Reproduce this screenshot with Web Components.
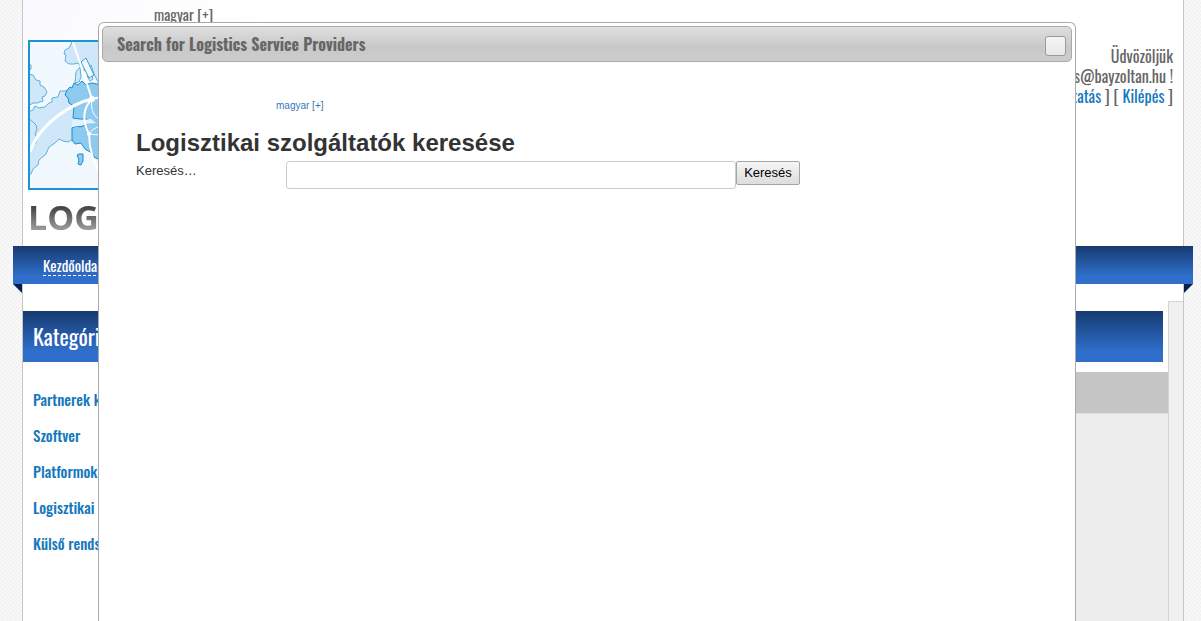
<!DOCTYPE html>
<html lang="hu">
<head>
<meta charset="utf-8">
<title>Logisztikai szolgáltatók keresése</title>
<style>
  html, body { height: 100%; }
  body {
    margin: 0;
    color: #666;
    font-family: Oswald, "Roboto Condensed", "Liberation Sans Narrow", sans-serif;
    background: repeating-conic-gradient(#f3f3f3 0 25%, #f8f8f8 0 50%) 0 0 / 4px 4px;
    --link: #1679bd;
    --band: linear-gradient(#173a70, #2f6fcb 80%);
  }
</style>
</head>
<body>
<page-frame>
  <site-header slot="header">
    <lang-switch slot="lang">magyar [+]</lang-switch>
    <europe-map slot="logo"></europe-map>
    <user-box slot="user"></user-box>
  </site-header>
  <ribbon-nav slot="nav"><a href="#">Kezdőoldal</a></ribbon-nav>
  <side-menu slot="side" heading="Kategóriák">
    <a href="#">Partnerek keresése</a>
    <a href="#">Szoftver</a>
    <a href="#">Platformok</a>
    <a href="#">Logisztikai</a>
    <a href="#">Külső rendszerek</a>
  </side-menu>
  <content-panel></content-panel>
</page-frame>

<modal-dialog heading="Search for Logistics Service Providers">
  <search-form></search-form>
</modal-dialog>

<script>
  // shared base: puts the markup into an open shadow root
  class Base extends HTMLElement {
    constructor() {
      super()
      this.attachShadow({mode: 'open'})
      this.shadowRoot.innerHTML = this.render()
    }
  }

  // page column with its side borders
  customElements.define('page-frame', class extends Base {
    render() {
      return `
        <style>
          :host {
            display: flex;
            flex-direction: column;
            box-sizing: border-box;
            min-height: 100%;
            margin: 0 17px 0 22px;
            border: solid #c6c6c6;
            border-width: 0 1px;
            background: #fff;
          }
          main {
            flex: 1;
            display: grid;
            grid-template-columns: 220px 1fr;
            column-gap: 20px;
            padding-top: 17px;
          }
          ::slotted([slot="side"]) { margin-top: 10px; }
        </style>
        <slot name="header"></slot>
        <slot name="nav"></slot>
        <main>
          <slot name="side"></slot>
          <slot></slot>
        </main>
      `
    }
  })

  customElements.define('site-header', class extends Base {
    render() {
      return `
        <style>
          :host {
            display: grid;
            grid-template-columns: 1fr auto;
            grid-template-rows: 40px auto;
            box-sizing: border-box;
            height: 246px;
            padding: 0 10px 0 5px;
            background: radial-gradient(circle at 0 0, #fafafe, #fff 240px);
          }
          ::slotted([slot="lang"]) { grid-column: 1 / 3; margin: 4px 0 0 126px; }
          strong {
            display: block;
            font: bold 34px/40px "Open Sans", sans-serif;
            margin-top: 7px;
            background: linear-gradient(#444 25%, #999 80%);
            -webkit-background-clip: text;
            background-clip: text;
            color: transparent;
          }
        </style>
        <slot name="lang"></slot>
        <div>
          <slot name="logo"></slot>
          <strong>LOG</strong>
        </div>
        <slot name="user"></slot>
      `
    }
  })

  customElements.define('lang-switch', class extends Base {
    render() {
      return `
        <style>
          :host { display: block; font-size: 15px; line-height: 20px; }
        </style>
        <slot></slot>
      `
    }
  })

  // logo: map of Europe with the routes
  customElements.define('europe-map', class extends Base {
    render() {
      return `
        <style>
          :host { display: block; width: 150px; }
          svg { display: block; }
        </style>
        <svg width="150" height="150" viewBox="0 0 150 150" role="img" aria-label="Europe">
          <rect width="150" height="150" fill="#f1f9fe"/>
          <g fill="#cfe7f8" stroke="#5cb0de" stroke-width="1">
            <path d="M0 34l5 1 3 5 4 1 0 4 4 2 3 5-2 4-3 1 1 4-6 2-4 0-5 3z"/>
            <path d="M0 24l3 1 0 4-3 3z"/>
            <path d="M0 72l5-2 2-4 4 2 6-1 4-4 3-1 0-4 6-1 2-6 6 0 3-3 3 0 50 0v58l-46-6-4 0-4 2-5-1-4-2-4 4-6 4-3 7-7 6-1 5-5 4-2 5-5 1-2 2z"/>
            <path d="M44 2l-3 6-4 2-1 4 2 1-1 6 4 3 5 0 4-1 6 8 7-6 3 9 11 22V0H45z"/>
            <path d="M47 43l1-11 4-5 1 10-2 5zM59 36l5-1 1 4-3 2z"/>
          </g>
          <path d="M0 78l4 3 4 4 1 4-2 5 2 4-1 5-3 3-5 4" fill="none" stroke="#5cb0de"/>
          <path d="M53 22l5-4 8 17-5 3z" fill="#f1f9fe" stroke="#3a9fd8"/>
          <path d="M46 103l8 2 5 5 7 7 18 8v20H46z" fill="#f1f9fe"/>
          <g fill="#8ccaef" stroke="#188fd0" stroke-width="1">
            <path d="M39 50l3-3 2 1 2-5 4 2 4-4 4 4 5-2 20 3v80l-17-9-2-4-7-4-4-6-6 1-3-4 0-12 5-2 3 1 6-2 1-6-6 0-8-1 1-12-5-3-1-5-3-3z"/>
            <path d="M44 80l13 0 6-1 5 4-12 1-6 2-6 1z" fill="#e2f2fc" stroke="none"/>
            <path d="M49 115l2-1 4 0 0 7-2 4-3-1 1-4z"/>
          </g>
          <g fill="none" stroke="#fff" stroke-width="2">
            <path d="M45 2l19 57 40-9"/>
            <path d="M64 59C46 63 12 82 2 112" stroke-width="3"/>
            <path d="M64 59C54 69 55 82 61 94C61 108 64 122 76 140"/>
            <path d="M64 59C62 70 66 80 80 83M61 94q5-9 20-8M61 94l20 2" stroke-width="1"/>
          </g>
          <circle cx="64" cy="59" r="3" fill="#fff"/>
          <circle cx="61" cy="94" r="2" fill="#fff"/>
          <rect x="1" y="1" width="148" height="148" fill="none" stroke="#1c93d2" stroke-width="2"/>
        </svg>
      `
    }
  })

  customElements.define('user-box', class extends Base {
    render() {
      return `
        <style>
          :host {
            display: block;
            margin-top: 6px;
            text-align: right;
            white-space: nowrap;
            font-size: 16px;
            line-height: 20px;
          }
          a { color: var(--link); text-decoration: none; }
        </style>
        <div>Üdvözöljük</div>
        <div>s@bayzoltan.hu !</div>
        <div><a href="#">tatás</a> ] [ <a href="#">Kilépés</a> ]</div>
      `
    }
  })

  // blue ribbon, sticks out of the column by 10px on both sides
  customElements.define('ribbon-nav', class extends Base {
    render() {
      return `
        <style>
          :host {
            display: block;
            position: relative;
            box-sizing: border-box;
            height: 38px;
            margin: 0 -10px;
            padding: 9px 30px;
            background: var(--band);
            font-size: 15px;
            line-height: 20px;
          }
          :host::before, :host::after {
            content: "";
            position: absolute;
            top: 100%;
            width: 9px;
            height: 9px;
            background: #06204a;
          }
          :host::before { left: 0; clip-path: polygon(0 0, 100% 0, 100% 100%); }
          :host::after { right: 0; clip-path: polygon(0 0, 100% 0, 0 100%); }
          ::slotted(a) {
            display: block;
            width: fit-content;
            color: #fff;
            text-decoration: none;
            border-bottom: 1px dashed #fff;
          }
        </style>
        <slot></slot>
      `
    }
  })

  customElements.define('side-menu', class extends Base {
    render() {
      return `
        <style>
          :host { display: block; }
          h2 {
            margin: 0 0 19px;
            padding: 0 10px;
            background: var(--band);
            color: #fff;
            font-size: 22px;
            font-weight: normal;
            line-height: 51px;
          }
          ::slotted(a) {
            display: block;
            padding: 0 10px;
            color: var(--link);
            font-size: 15px;
            line-height: 36px;
            text-decoration: none;
            font-weight: 500;
          }
        </style>
        <h2>${this.getAttribute('heading')}</h2>
        <nav><slot></slot></nav>
      `
    }
  })

  // main column, mostly under the dialog
  customElements.define('content-panel', class extends Base {
    render() {
      return `
        <style>
          :host { display: grid; grid-template-columns: 1fr 15px; }
          .column { display: flex; flex-direction: column; }
          .band { height: 51px; margin: 10px 5px 10px 0; background: var(--band); }
          .bar { height: 41px; background: #c5c5c5; border-bottom: 1px solid #ddd; }
          .body { flex: 1; background: #ededed; }
          aside { border: solid #d5d5d5; border-width: 1px 0 0 1px; background: #f0f0f0; }
        </style>
        <div class="column">
          <div class="band"></div>
          <div class="bar"></div>
          <div class="body"></div>
        </div>
        <aside></aside>
      `
    }
  })

  customElements.define('modal-dialog', class extends Base {
    render() {
      return `
        <style>
          :host {
            position: fixed;
            inset: 22px 125px 0 98px;
            z-index: 10;
            padding: 3px;
            border: 1px solid #aaa;
            border-bottom: 0;
            border-radius: 6px 6px 0 0;
            background: #fff;
          }
          header {
            display: flex;
            align-items: center;
            justify-content: space-between;
            box-sizing: border-box;
            height: 36px;
            padding: 0 5px 0 14px;
            border: 1px solid #aaa;
            border-radius: 5px;
            background: linear-gradient(#dfdfdf, #c8c8c8 60%, #cdcdcd);
          }
          h1 { margin: 0; font-size: 16px; font-weight: bold; line-height: 20px; }
          button {
            box-sizing: border-box;
            width: 21px;
            height: 20px;
            margin-top: 4px;
            padding: 0;
            border: 1px solid #999;
            border-radius: 3px;
            background: linear-gradient(#f5f5f5, #e8e8e8);
          }
        </style>
        <header>
          <h1>${this.getAttribute('heading')}</h1>
          <button type="button" aria-label="Close"></button>
        </header>
        <slot></slot>
      `
    }
  })

  customElements.define('search-form', class extends Base {
    render() {
      return `
        <style>
          :host {
            display: block;
            padding: 36px 34px;
            color: #333;
            font: 13px/20px "Liberation Sans", Arial, sans-serif;
          }
          .lang { display: block; margin-left: 140px; color: #337ab7; font-size: 10px; line-height: 16px; text-decoration: none; }
          h2 { margin: 14px 0 3px; font-size: 24px; line-height: 30px; }
          form { display: grid; grid-template-columns: 150px 450px auto 1fr; align-items: start; }
          input {
            box-sizing: border-box;
            height: 28px;
            border: 1px solid #ccc;
            border-radius: 3px;
            font: inherit;
          }
          button {
            box-sizing: border-box;
            width: 64px;
            height: 24px;
            padding: 0;
            border: 1px solid #a5a5a5;
            border-radius: 2px;
            background: linear-gradient(#f5f5f5, #ddd);
            color: #000;
            font: inherit;
          }
        </style>
        <a class="lang" href="#">magyar [+]</a>
        <h2>Logisztikai szolgáltatók keresése</h2>
        <form>
          <label for="q">Keresés…</label>
          <input id="q" type="text">
          <button type="button">Keresés</button>
        </form>
      `
    }
  })
</script>
</body>
</html>
